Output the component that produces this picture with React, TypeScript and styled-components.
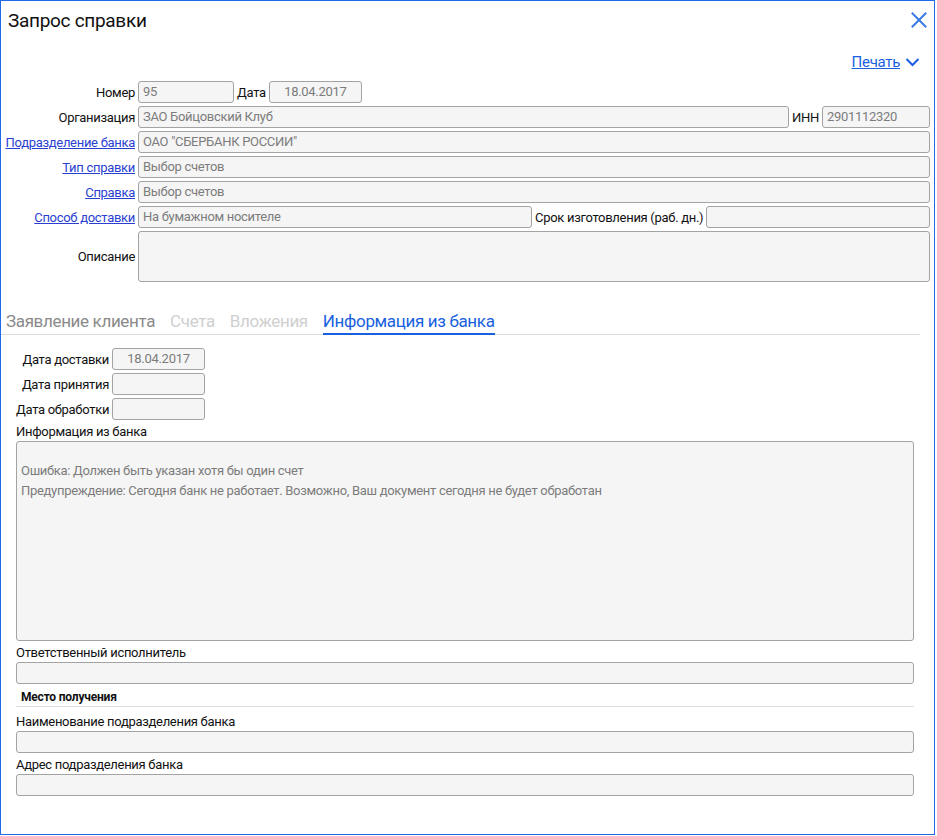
import React from 'react';
import styled, { createGlobalStyle } from 'styled-components';

const GlobalStyle = createGlobalStyle`
  html, body {
    margin: 0;
    padding: 0;
    background: #ffffff;
  }
  body {
    font-family: Roboto, "Noto Sans", "Liberation Sans", sans-serif;
    font-size: 13px;
    letter-spacing: -0.3px;
    color: #222222;
  }
  * {
    box-sizing: border-box;
  }
`;

const Dialog = styled.div`
  display: flex;
  flex-direction: column;
  width: 935px;
  height: 835px;
  border: 1px solid #1f6ae8;
  background: #ffffff;
`;

const Header = styled.div`
  display: flex;
  align-items: center;
  justify-content: space-between;
  padding: 6px 5px 0 7px;
  height: 32px;
`;

const Title = styled.h1`
  margin: 0;
  font-size: 19px;
  font-weight: 400;
  letter-spacing: -0.3px;
  color: #111111;
`;

const CloseButton = styled.button`
  display: flex;
  align-items: center;
  justify-content: center;
  border: none;
  background: none;
  padding: 0;
  width: 20px;
  height: 20px;
  cursor: pointer;
`;

const PrintBar = styled.div`
  display: flex;
  justify-content: flex-end;
  align-items: center;
  gap: 5px;
  padding: 9px 14px 0 0;
  height: 48px;
`;

const PrintLink = styled.a`
  font-size: 15px;
  color: #1a5fe0;
  text-decoration: underline;
  cursor: pointer;
`;

const Form = styled.div`
  display: flex;
  flex-direction: column;
  gap: 3px;
  padding: 0 4px 0 4px;
`;

const Row = styled.div`
  display: flex;
  align-items: center;
  gap: 3px;
`;

const Label = styled.span<{ $width?: number }>`
  flex: none;
  width: ${({ $width }) => ($width ? `${$width}px` : 'auto')};
  text-align: right;
  white-space: nowrap;
  color: #111111;
`;

const LinkLabel = styled.a`
  color: #2a3fd0;
  text-decoration: underline;
  cursor: pointer;
`;

const Field = styled.div<{ $width?: number; $center?: boolean; $height?: number }>`
  flex: ${({ $width }) => ($width ? 'none' : '1')};
  width: ${({ $width }) => ($width ? `${$width}px` : 'auto')};
  height: ${({ $height }) => ($height ? `${$height}px` : '22px')};
  border: 1px solid #a3a3a3;
  border-radius: 3px;
  background: #f5f5f5;
  padding: 0 4px;
  line-height: 20px;
  color: #7c7c7c;
  text-align: ${({ $center }) => ($center ? 'center' : 'left')};
  white-space: nowrap;
  overflow: hidden;
`;

const Tabs = styled.div`
  display: flex;
  align-items: flex-end;
  gap: 15px;
  margin: 28px 14px 0 0;
  padding-left: 5px;
  border-bottom: 1px solid #dddddd;
`;

const Tab = styled.div<{ $state: 'normal' | 'disabled' | 'active' }>`
  padding-bottom: 1px;
  font-size: 17px;
  letter-spacing: -0.35px;
  line-height: 22px;
  color: ${({ $state }) => ($state === 'active' ? '#1a5fe0' : $state === 'disabled' ? '#cfcfcf' : '#8a8a8a')};
  border-bottom: 2px solid ${({ $state }) => ($state === 'active' ? '#1a5fe0' : 'transparent')};
  margin-bottom: -1px;
`;

const TabBody = styled.div`
  padding: 13px 20px 0 15px;
`;

const DateRows = styled.div`
  display: flex;
  flex-direction: column;
  gap: 3px;
`;

const Caption = styled.div<{ $mt: number }>`
  margin-top: ${({ $mt }) => `${$mt}px`};
  line-height: 18px;
  color: #111111;
`;

const InfoBox = styled.div`
  height: 200px;
  border: 1px solid #a3a3a3;
  border-radius: 3px;
  background: #f5f5f5;
  padding: 19px 4px 0;
  line-height: 20px;
  color: #7c7c7c;
`;

const Section = styled.div`
  margin-top: 4px;
  padding-left: 5px;
  border-bottom: 1px solid #dddddd;
  font-size: 12px;
  font-weight: 700;
  letter-spacing: -0.2px;
  line-height: 18px;
  color: #111111;
`;

const App = () => {
  return (
    <>
      <GlobalStyle />
      <Dialog>
        <Header>
          <Title>Запрос справки</Title>
          <CloseButton aria-label="Закрыть">
            <svg width="16" height="16" viewBox="0 0 16 16">
              <path d="M1.5 1.5 L14.5 14.5 M14.5 1.5 L1.5 14.5" stroke="#3b7be6" strokeWidth="2" strokeLinecap="square" />
            </svg>
          </CloseButton>
        </Header>
        <PrintBar>
          <PrintLink>Печать</PrintLink>
          <svg width="15" height="10" viewBox="0 0 15 10">
            <path d="M1.5 2 L7.5 8 L13.5 2" fill="none" stroke="#1a5fe0" strokeWidth="2" />
          </svg>
        </PrintBar>
        <Form>
          <Row>
            <Label $width={130}>Номер</Label>
            <Field $width={96}>95</Field>
            <Label>Дата</Label>
            <Field $width={93} $center>
              18.04.2017
            </Field>
          </Row>
          <Row>
            <Label $width={130}>Организация</Label>
            <Field>ЗАО Бойцовский Клуб</Field>
            <Label>ИНН</Label>
            <Field $width={108}>2901112320</Field>
          </Row>
          <Row>
            <Label $width={130}>
              <LinkLabel>Подразделение банка</LinkLabel>
            </Label>
            <Field>ОАО "СБЕРБАНК РОССИИ"</Field>
          </Row>
          <Row>
            <Label $width={130}>
              <LinkLabel>Тип справки</LinkLabel>
            </Label>
            <Field>Выбор счетов</Field>
          </Row>
          <Row>
            <Label $width={130}>
              <LinkLabel>Справка</LinkLabel>
            </Label>
            <Field>Выбор счетов</Field>
          </Row>
          <Row>
            <Label $width={130}>
              <LinkLabel>Способ доставки</LinkLabel>
            </Label>
            <Field $width={394}>На бумажном носителе</Field>
            <Label>Срок изготовления (раб. дн.)</Label>
            <Field />
          </Row>
          <Row>
            <Label $width={130}>Описание</Label>
            <Field $height={51} />
          </Row>
        </Form>
        <Tabs>
          <Tab $state="normal">Заявление клиента</Tab>
          <Tab $state="disabled">Счета</Tab>
          <Tab $state="disabled">Вложения</Tab>
          <Tab $state="active">Информация из банка</Tab>
        </Tabs>
        <TabBody>
          <DateRows>
            <Row>
              <Label $width={93}>Дата доставки</Label>
              <Field $width={93} $center>
                18.04.2017
              </Field>
            </Row>
            <Row>
              <Label $width={93}>Дата принятия</Label>
              <Field $width={93} />
            </Row>
            <Row>
              <Label $width={93}>Дата обработки</Label>
              <Field $width={93} />
            </Row>
          </DateRows>
          <Caption $mt={3}>Информация из банка</Caption>
          <InfoBox>
            Ошибка: Должен быть указан хотя бы один счет
            <br />
            Предупреждение: Сегодня банк не работает. Возможно, Ваш документ сегодня не будет обработан
          </InfoBox>
          <Caption $mt={3}>Ответственный исполнитель</Caption>
          <Field />
          <Section>Место получения</Section>
          <Caption $mt={6}>Наименование подразделения банка</Caption>
          <Field />
          <Caption $mt={3}>Адрес подразделения банка</Caption>
          <Field />
        </TabBody>
      </Dialog>
    </>
  );
};

export default App;
